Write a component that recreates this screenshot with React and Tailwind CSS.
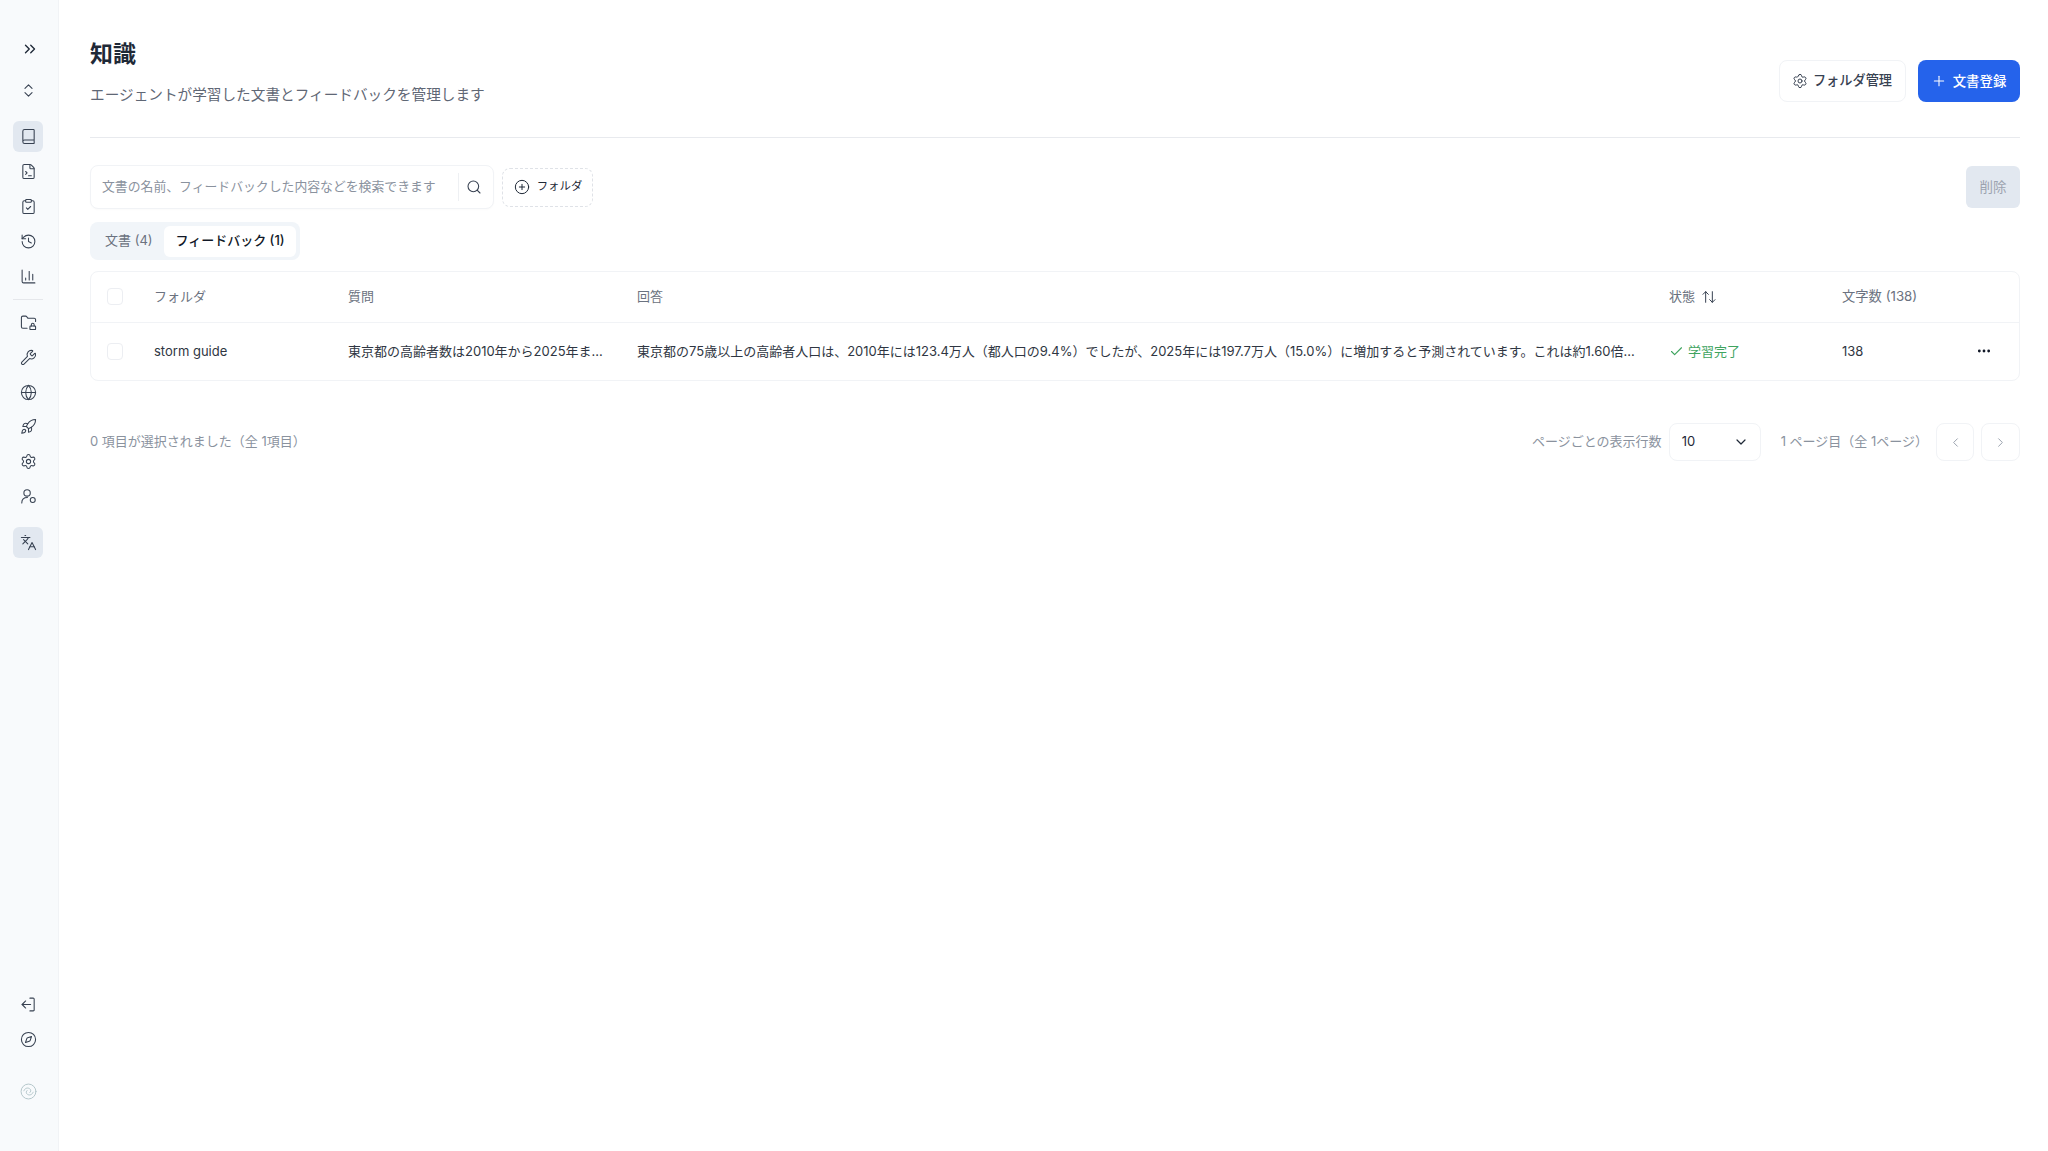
import {
  ArrowUpDown, Book, ChartColumn, Check, ChevronDown, ChevronLeft, ChevronRight, ChevronsRight, ChevronsUpDown,
  CirclePlus, ClipboardCheck, Compass, Ellipsis, FileTerminal, FolderLock, Globe, History, Languages, Plus,
  Rocket, Search, Settings, Wrench,
} from "lucide-react";

const fontStack = "font-['Inter','Noto_Sans_CJK_JP','Noto_Sans',sans-serif]";

function NavItem({ icon: Icon, active }) {
  return (
    <div className={`flex h-[31px] w-[30px] items-center justify-center rounded-md ${active ? "bg-[#e2e8f0]" : ""}`}>
      <Icon className="h-[17px] w-[17px] text-[#374151]" strokeWidth={1.5} />
    </div>
  );
}

function UserDot(props) {
  return (
    <svg viewBox="0 0 24 24" fill="none" stroke="currentColor" strokeWidth="1.6" strokeLinecap="round" {...props}>
      <circle cx="10" cy="7" r="4.5" />
      <path d="M2.5 21c0-4.5 3-7.5 8-7.5" />
      <circle cx="18" cy="17" r="3.5" />
    </svg>
  );
}

function ArrowBracket(props) {
  return (
    <svg viewBox="0 0 24 24" fill="none" stroke="currentColor" strokeWidth="1.8" strokeLinecap="round" strokeLinejoin="round" {...props}>
      <path d="M14 3h5a2 2 0 0 1 1 1v16a2 2 0 0 1-1 1h-5" />
      <path d="M15 12H3" />
      <path d="m8 7-5 5 5 5" />
    </svg>
  );
}

function Sidebar() {
  return (
    <aside className="flex h-[1151px] w-[59px] shrink-0 flex-col items-center border-r border-[#f1f3f6] bg-[#f8fafc] pr-[2px]">
      <ChevronsRight className="ml-[3px] mt-[40px] h-[18px] w-[18px] text-[#1f2937]" strokeWidth={1.8} />
      <ChevronsUpDown className="mt-[24px] h-[17px] w-[17px] text-[#374151]" strokeWidth={1.5} />
      <div className="mt-[22px] flex flex-col items-center gap-[4px]">
        <NavItem icon={Book} active />
        <NavItem icon={FileTerminal} />
        <NavItem icon={ClipboardCheck} />
        <NavItem icon={History} />
        <NavItem icon={ChartColumn} />
      </div>
      <div className="my-[7px] h-px w-[30px] bg-[#e5e7eb]" />
      <div className="flex flex-col items-center gap-[3.75px]">
        <NavItem icon={FolderLock} />
        <NavItem icon={Wrench} />
        <NavItem icon={Globe} />
        <NavItem icon={Rocket} />
        <NavItem icon={Settings} />
        <NavItem icon={UserDot} />
      </div>
      <div className="mt-[15px]">
        <NavItem icon={Languages} active />
      </div>
      <div className="mt-auto flex flex-col items-center gap-[4px]">
        <NavItem icon={ArrowBracket} />
        <NavItem icon={Compass} />
      </div>
      <svg viewBox="0 0 24 24" fill="none" stroke="#b4c6ca" strokeWidth="1.4" strokeLinecap="round" className="mb-[51px] mt-[28px] h-[17px] w-[17px]">
        <circle cx="12" cy="12" r="10.5" />
        <path d="M5.5 11c1-3.500 5-5 8-3 2.500 1.700 2 4.500 0.500 5.500" />
        <path d="M18.500 13c-1 3.500-5 5-8 3-2.500-1.700-2-4.500-0.500-5.500" />
      </svg>
    </aside>
  );
}

function Toolbar() {
  return (
    <div className="flex h-[44px] items-center justify-between mt-[27px]">
      <div className="flex items-center gap-[8px]">
        <div className="flex h-[44px] w-[404px] items-center rounded-lg border border-[#f1f3f6] bg-white pl-[11px] shadow-[0_1px_2px_rgba(0,0,0,0.02)]">
          <span className="w-[356px] text-[12.85px] text-[#8a929e]">文書の名前、フィードバックした内容などを検索できます</span>
          <div className="h-[28px] w-px bg-[#eef0f3]" />
          <Search className="ml-[7px] h-[16px] w-[16px] text-[#374151]" strokeWidth={1.6} />
        </div>
        <div className="flex h-[39px] w-[91px] items-center justify-center gap-[7px] rounded-lg border border-dashed border-[#dfe2e7] pl-[1px] text-[11.4px] text-[#1f2937]">
          <CirclePlus className="h-[16px] w-[16px]" strokeWidth={1.5} />
          <span>フォルダ</span>
        </div>
      </div>
      <button className="h-[42px] w-[54px] rounded-md bg-[#e2e8f0] text-[13.5px] text-[#9ca3af]">削除</button>
    </div>
  );
}

function Tabs() {
  return (
    <div className="mt-[13px] flex h-[38px] w-[210px] items-center rounded-lg bg-[#f1f5f9] pl-[15px] pr-[3.5px]">
      <span className="w-[59px] text-[13px] text-[#6b7280]">文書 (4)</span>
      <span className="flex h-[31px] w-[132px] items-center justify-center rounded-md bg-white text-[13px] font-medium text-[#111827]">
        フィードバック (1)
      </span>
    </div>
  );
}

function DocTable() {
  return (
    <div className="mt-[11px] overflow-hidden rounded-lg border border-[#f1f3f6] bg-white">
      <table className="w-full table-fixed border-collapse text-left text-[13px]">
        <colgroup>
          <col className="w-[63px]" />
          <col className="w-[194px]" />
          <col className="w-[289px]" />
          <col className="w-[1032px]" />
          <col className="w-[173px]" />
          <col />
        </colgroup>
        <thead>
          <tr className="h-[50px] border-b border-[#f1f3f6] text-[#6b7280]">
            <th className="pl-[16px] font-normal">
              <div className="h-[17px] w-[16px] rounded border border-[#eceef2]" />
            </th>
            <th className="font-normal">フォルダ</th>
            <th className="font-normal">質問</th>
            <th className="font-normal">回答</th>
            <th className="font-normal">
              <span className="flex items-center gap-[6px]">
                状態 <ArrowUpDown className="h-[16px] w-[16px] text-[#374151]" strokeWidth={1.5} />
              </span>
            </th>
            <th className="font-normal text-[13.3px]">文字数 (138)</th>
          </tr>
        </thead>
        <tbody>
          <tr className="h-[58px] text-[#2f3642]">
            <td className="pl-[16px]">
              <div className="h-[17px] w-[16px] rounded border border-[#eceef2]" />
            </td>
            <td>storm guide</td>
            <td className="whitespace-nowrap">東京都の高齢者数は2010年から2025年ま...</td>
            <td className="whitespace-nowrap">
              東京都の75歳以上の高齢者人口は、2010年には123.4万人（都人口の9.4%）でしたが、2025年には197.7万人（15.0%）に増加すると予測されています。これは約1.60倍...
            </td>
            <td>
              <span className="flex items-center gap-[4px] text-[#3fa45f]">
                <Check className="h-[15px] w-[15px]" strokeWidth={1.8} />
                学習完了
              </span>
            </td>
            <td>
              <div className="flex items-center justify-between pr-[27px]">
                <span>138</span>
                <Ellipsis className="h-[16px] w-[16px] text-[#111827]" strokeWidth={2.2} />
              </div>
            </td>
          </tr>
        </tbody>
      </table>
    </div>
  );
}

function Pager() {
  return (
    <div className="mt-[42px] flex items-center justify-between text-[13px] text-[#8a929e]">
      <span>0 項目が選択されました（全 1項目）</span>
      <div className="flex items-center">
        <span>ページごとの表示行数</span>
        <div className="ml-[7px] flex h-[38px] w-[92px] items-center justify-between rounded-lg border border-[#f1f3f6] pl-[12px] pr-[11px] text-[#1f2937]">
          10
          <ChevronDown className="h-[16px] w-[16px]" strokeWidth={1.8} />
        </div>
        <span className="ml-[20px]">1 ページ目（全 1ページ）</span>
        <div className="ml-[8px] flex h-[38px] w-[38px] items-center justify-center rounded-lg border border-[#f1f3f6]">
          <ChevronLeft className="h-[15px] w-[15px] text-[#9ca3af]" strokeWidth={1.6} />
        </div>
        <div className="ml-[7px] flex h-[38px] w-[39px] items-center justify-center rounded-lg border border-[#f1f3f6]">
          <ChevronRight className="h-[15px] w-[15px] text-[#9ca3af]" strokeWidth={1.6} />
        </div>
      </div>
    </div>
  );
}

export default function App() {
  return (
    <div className={`flex min-h-[1151px] bg-white ${fontStack}`}>
      <Sidebar />
      <main className="min-w-0 flex-1 pl-[31px] pr-[28px]">
        <header className="flex h-[138px] items-start justify-between border-b border-[#e8eaee]">
          <div>
            <h1 className="pt-[37px] text-[23px] leading-[34px] font-bold text-[#1f2937]">知識</h1>
            <p className="mt-[13px] text-[14.65px] leading-[22px] text-[#5f6775]">エージェントが学習した文書とフィードバックを管理します</p>
          </div>
          <div className="mr-[0.5px] mt-[60px] flex items-center gap-[12px]">
            <button className="flex h-[42px] w-[127px] items-center justify-center gap-[5px] rounded-lg border border-[#f1f3f6] bg-white text-[13.2px] font-medium text-[#374151]">
              <Settings className="h-[16px] w-[16px]" strokeWidth={1.5} />
              フォルダ管理
            </button>
            <button className="flex h-[42px] w-[102px] items-center justify-center gap-[6px] rounded-lg bg-[#2563eb] text-[13.4px] font-medium text-white">
              <Plus className="h-[16px] w-[16px]" strokeWidth={1.6} />
              文書登録
            </button>
          </div>
        </header>
        <Toolbar />
        <Tabs />
        <DocTable />
        <Pager />
      </main>
    </div>
  );
}
